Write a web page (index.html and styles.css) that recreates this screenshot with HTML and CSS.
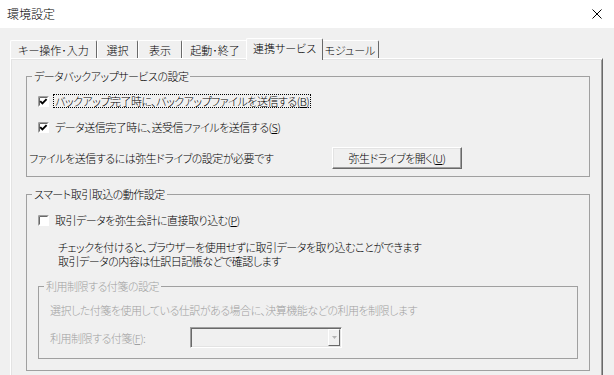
FILE: index.html
```html
<!DOCTYPE html>
<html lang="ja">
<head>
<meta charset="utf-8">
<title>環境設定</title>
<link rel="stylesheet" href="styles.css">
</head>
<body>
<div class="window">
  <header class="titlebar">
    <span class="title">環境設定</span>
    <svg class="close" width="10" height="10" viewBox="0 0 10 10"><path d="M0.5 0.5L9.5 9.5M9.5 0.5L0.5 9.5" stroke="#000" stroke-width="1" fill="none"/></svg>
  </header>
  <main class="content">
    <nav class="tabs">
      <div class="tab t1">キー操作･入力</div>
      <div class="tab t2">選択</div>
      <div class="tab t3">表示</div>
      <div class="tab t4">起動･終了</div>
      <div class="tab t5 active">連携サービス</div>
      <div class="tab t6">モジュール</div>
    </nav>
    <section class="panel">
      <fieldset class="group backup">
        <legend>データバックアップサービスの設定</legend>
        <div class="check-row first">
          <svg class="cb" width="11" height="11" viewBox="0 0 11 11">
            <rect x="0" y="0" width="11" height="11" fill="#fff"/>
            <path d="M0.5 10.5V0.5H10.5" stroke="#a0a0a0" fill="none"/>
            <path d="M1.5 9.5V1.5H9.5" stroke="#696969" fill="none"/>
            <path d="M2.2 5.2L4.4 7.4L8.6 3.2" stroke="#000" stroke-width="1.9" fill="none"/>
          </svg>
          <span class="label focus">バックアップ完了時に、バックアップファイルを送信する(<u>B</u>)</span>
        </div>
        <div class="check-row second">
          <svg class="cb" width="11" height="11" viewBox="0 0 11 11">
            <rect x="0" y="0" width="11" height="11" fill="#fff"/>
            <path d="M0.5 10.5V0.5H10.5" stroke="#a0a0a0" fill="none"/>
            <path d="M1.5 9.5V1.5H9.5" stroke="#696969" fill="none"/>
            <path d="M2.2 5.2L4.4 7.4L8.6 3.2" stroke="#000" stroke-width="1.9" fill="none"/>
          </svg>
          <span class="label">データ送信完了時に、送受信ファイルを送信する(<u>S</u>)</span>
        </div>
        <div class="drive-row">
          <span class="note">ファイルを送信するには弥生ドライブの設定が必要です</span>
          <button class="btn" type="button">弥生ドライブを開く(<u>U</u>)</button>
        </div>
      </fieldset>
      <fieldset class="group smart">
        <legend>スマート取引取込の動作設定</legend>
        <div class="check-row">
          <svg class="cb" width="11" height="11" viewBox="0 0 11 11">
            <rect x="0" y="0" width="11" height="11" fill="#fff"/>
            <path d="M0.5 10.5V0.5H10.5" stroke="#a0a0a0" fill="none"/>
            <path d="M1.5 9.5V1.5H9.5" stroke="#696969" fill="none"/>
          </svg>
          <span class="label">取引データを弥生会計に直接取り込む(<u>P</u>)</span>
        </div>
        <p class="desc">チェックを付けると、ブラウザーを使用せずに取引データを取り込むことができます<br>取引データの内容は仕訳日記帳などで確認します</p>
        <fieldset class="group inner">
          <legend>利用制限する付箋の設定</legend>
          <p class="inner-text">選択した付箋を使用している仕訳がある場合に、決算機能などの利用を制限します</p>
          <div class="combo-row">
            <span class="combo-label">利用制限する付箋(<u>F</u>):</span>
            <div class="combo">
              <span class="combo-btn"><svg width="5" height="3" viewBox="0 0 5 3"><path d="M0 0H5L2.5 3Z" fill="#b4b4b4"/></svg></span>
            </div>
          </div>
        </fieldset>
      </fieldset>
    </section>
  </main>
</div>
</body>
</html>
```

FILE: styles.css
```css
* {
  box-sizing: border-box;
}

html,
body {
  margin: 0;
  padding: 0;
}

body {
  width: 614px;
  height: 375px;
  overflow: hidden;
  background: #f0f0f0;
  color: #000;
  font-family: "Noto Sans CJK JP", "Noto Sans", sans-serif;
  font-size: 11px;
  font-weight: 300;
  letter-spacing: -0.5px;
  font-feature-settings: "palt";
}

.titlebar {
  height: 28px;
  background: #fff;
  display: flex;
  align-items: center;
  justify-content: space-between;
  padding: 0 12px 0 7px;
}

.title {
  font-size: 12px;
  line-height: 16px;
  letter-spacing: 0;
  font-feature-settings: normal;
}

.close {
  display: block;
}

.content {
  padding: 10px 11px 0 10px;
}

/* tabs */
.tabs {
  display: flex;
  align-items: flex-end;
  height: 20px;
}

.tab {
  height: 18px;
  border-top: 1px solid #fff;
  border-left: 1px solid #fff;
  border-right: 1px solid #696969;
  border-radius: 2px 2px 0 0;
  padding-top: 2px;
  line-height: 14px;
  letter-spacing: 0;
  text-align: center;
  white-space: nowrap;
  flex: none;
}

.t1 { width: 87px; }
.t2 { width: 41px; }
.t3 { width: 44px; }
.t4 { width: 66px; }
.t6 { width: 58px; }

.tab.active {
  width: 77px;
  height: 22px;
  margin: 0 -2px -2px;
  background: #f0f0f0;
  position: relative;
  z-index: 1;
}

/* panel */
.panel {
  height: 317px;
  border-top: 1px solid #fff;
  border-left: 1px solid #fff;
  border-right: 1px solid #696969;
  box-shadow: inset 1px 1px 0 #e3e3e3, inset -1px 0 0 #a0a0a0;
  padding: 0 12px 0 15px;
}

/* group boxes */
.group {
  border: 1px solid #a0a0a0;
  margin: 0;
  padding: 0;
  min-width: 0;
}

.group > legend {
  margin-left: 5px;
  padding: 0 2px;
  line-height: 16px;
}

.backup {
  margin-top: 9px;
  padding-bottom: 7px;
}

.check-row {
  display: flex;
  align-items: center;
  height: 14px;
  padding-left: 11px;
}

.cb {
  display: block;
  flex: none;
  margin-right: 4px;
}

.label {
  border: 1px dotted transparent;
  padding: 0 1px;
  line-height: 12px;
  white-space: nowrap;
}

.label.focus {
  border-color: #000;
}

u {
  text-underline-offset: 1px;
}

.backup .first {
  margin-top: 10px;
}

.backup .second {
  margin-top: 12px;
}

.drive-row {
  display: flex;
  align-items: center;
  height: 22px;
  margin-top: 13px;
  padding-left: 2px;
}

.note {
  width: 303px;
  flex: none;
  white-space: nowrap;
}

.btn {
  width: 130px;
  height: 22px;
  padding: 0;
  margin: 0;
  font: inherit;
  letter-spacing: inherit;
  color: #000;
  line-height: 14px;
  background: #f0f0f0;
  border: 1px solid;
  border-color: #fff #696969 #696969 #fff;
  box-shadow: inset -1px -1px 0 #a0a0a0, inset 1px 1px 0 #e3e3e3;
}

.smart {
  margin-top: 9px;
  padding-bottom: 11px;
}

.smart .check-row {
  margin-top: 11px;
}

.desc {
  margin: 13px 0 0 31px;
  line-height: 14px;
  white-space: nowrap;
}

/* disabled inner group */
.inner {
  margin: 10px 11px 0 11px;
  padding-bottom: 10px;
  color: #a0a0a0;
}

.inner-text {
  margin: 9px 0 0 11px;
  line-height: 14px;
  white-space: nowrap;
}

.combo-row {
  display: flex;
  align-items: center;
  height: 21px;
  margin: 10px 0 0 11px;
}

.combo-label {
  width: 140px;
  flex: none;
  white-space: nowrap;
}

.combo {
  width: 152px;
  height: 21px;
  display: flex;
  justify-content: flex-end;
  padding: 1px;
  border: 1px solid;
  border-color: #a0a0a0 #fff #fff #a0a0a0;
  box-shadow: inset 1px 1px 0 #696969, inset -1px -1px 0 #e3e3e3;
  background: #f0f0f0;
}

.combo-btn {
  width: 12px;
  display: flex;
  align-items: center;
  justify-content: center;
  border-top: 1px solid #fff;
  border-left: 1px solid #fff;
  border-right: 1px solid #696969;
  border-bottom: 1px solid #696969;
}

.combo-btn svg {
  display: block;
}
```
